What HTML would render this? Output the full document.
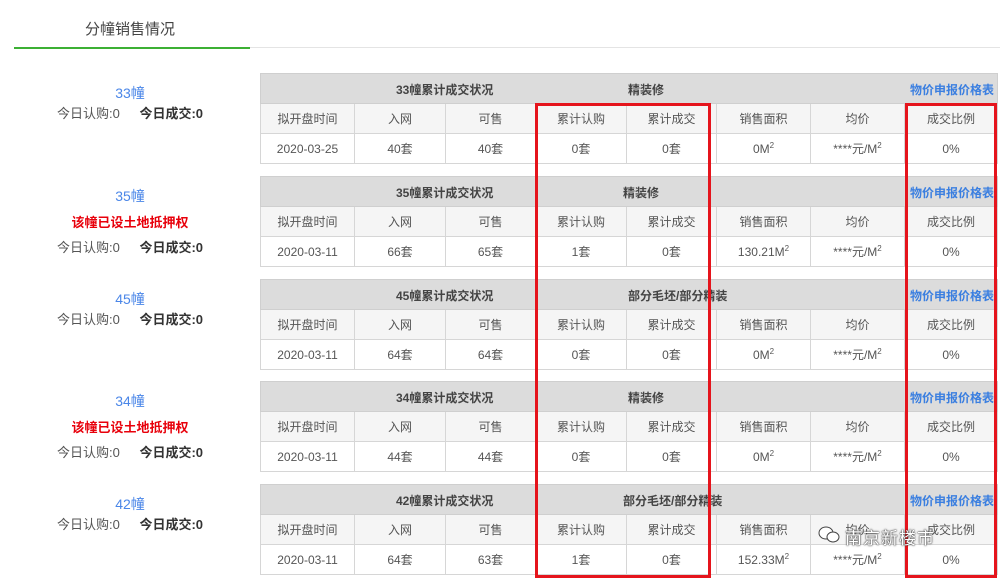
<!DOCTYPE html>
<html><head><meta charset="utf-8"><style>
body{margin:0;width:1000px;height:579px;background:#fff;font-family:"Liberation Sans","Noto Sans CJK SC",sans-serif;position:relative;overflow:hidden;color:#555}
.tab{position:absolute;left:85px;top:18px;font-size:15px;color:#444}
.line{position:absolute;left:14px;top:47px;width:986px;height:1px;background:#e4e4e4}
.gline{position:absolute;left:14px;top:47px;width:236px;height:2px;background:#3cb034}
.lb{position:absolute;left:40px;width:180px;text-align:center;font-size:13px}
.bn{color:#4a86e8;font-size:14px}
.red{color:#e8000b;font-weight:bold;font-size:13px}
.st{color:#555}.st b{color:#333;margin-left:16px}
table{position:absolute;left:260px;width:737px;border-collapse:collapse;font-size:12px;table-layout:fixed}
td{border:1px solid #d6d6d6;text-align:center;height:29px;padding:0;color:#555}
tr.h td{background:#dcdcdc;font-weight:bold;color:#444;border-color:#cfcfcf;position:relative}
tr.h span{position:absolute;top:7px;white-space:nowrap}
tr.c td{background:#f5f5f5}
.lk{color:#3b7fe0;right:3px}
sup{font-size:8px}
.rb{position:absolute;border:3px solid #e5141c;box-sizing:border-box}
.wm{position:absolute;left:845px;top:524px;font-size:17px;color:#fff;text-shadow:0 0 2px #333,0 0 1px #000;letter-spacing:1px}
.ic{position:absolute;left:818px;top:526px;width:22px;height:18px}
</style></head><body>
<div class="tab">分幢销售情况</div>
<div class="line"></div><div class="gline"></div>

<div class="lb" style="top:83px"><div class="bn">33幢</div><div class="st">今日认购:0 <b>今日成交:0</b></div></div>
<div class="lb" style="top:186px"><div class="bn">35幢</div><div class="red" style="margin-top:6px">该幢已设土地抵押权</div><div class="st" style="margin-top:6px">今日认购:0 <b>今日成交:0</b></div></div>
<div class="lb" style="top:289px"><div class="bn">45幢</div><div class="st">今日认购:0 <b>今日成交:0</b></div></div>
<div class="lb" style="top:391px"><div class="bn">34幢</div><div class="red" style="margin-top:6px">该幢已设土地抵押权</div><div class="st" style="margin-top:6px">今日认购:0 <b>今日成交:0</b></div></div>
<div class="lb" style="top:494px"><div class="bn">42幢</div><div class="st">今日认购:0 <b>今日成交:0</b></div></div>

<table style="top:73px"><colgroup><col width="94"><col width="91"><col width="90"><col width="91"><col width="90"><col width="94"><col width="94"><col width="93"></colgroup>
<tr class="h"><td colspan="8"><span style="left:135px">33幢累计成交状况</span><span style="left:367px">精装修</span><span class="lk">物价申报价格表</span></td></tr>
<tr class="c"><td>拟开盘时间</td><td>入网</td><td>可售</td><td>累计认购</td><td>累计成交</td><td>销售面积</td><td>均价</td><td>成交比例</td></tr>
<tr><td>2020-03-25</td><td>40套</td><td>40套</td><td>0套</td><td>0套</td><td>0M<sup>2</sup></td><td>****元/M<sup>2</sup></td><td>0%</td></tr></table>

<table style="top:176px"><colgroup><col width="94"><col width="91"><col width="90"><col width="91"><col width="90"><col width="94"><col width="94"><col width="93"></colgroup>
<tr class="h"><td colspan="8"><span style="left:135px">35幢累计成交状况</span><span style="left:362px">精装修</span><span class="lk">物价申报价格表</span></td></tr>
<tr class="c"><td>拟开盘时间</td><td>入网</td><td>可售</td><td>累计认购</td><td>累计成交</td><td>销售面积</td><td>均价</td><td>成交比例</td></tr>
<tr><td>2020-03-11</td><td>66套</td><td>65套</td><td>1套</td><td>0套</td><td>130.21M<sup>2</sup></td><td>****元/M<sup>2</sup></td><td>0%</td></tr></table>

<table style="top:279px"><colgroup><col width="94"><col width="91"><col width="90"><col width="91"><col width="90"><col width="94"><col width="94"><col width="93"></colgroup>
<tr class="h"><td colspan="8"><span style="left:135px">45幢累计成交状况</span><span style="left:367px">部分毛坯/部分精装</span><span class="lk">物价申报价格表</span></td></tr>
<tr class="c"><td>拟开盘时间</td><td>入网</td><td>可售</td><td>累计认购</td><td>累计成交</td><td>销售面积</td><td>均价</td><td>成交比例</td></tr>
<tr><td>2020-03-11</td><td>64套</td><td>64套</td><td>0套</td><td>0套</td><td>0M<sup>2</sup></td><td>****元/M<sup>2</sup></td><td>0%</td></tr></table>

<table style="top:381px"><colgroup><col width="94"><col width="91"><col width="90"><col width="91"><col width="90"><col width="94"><col width="94"><col width="93"></colgroup>
<tr class="h"><td colspan="8"><span style="left:135px">34幢累计成交状况</span><span style="left:367px">精装修</span><span class="lk">物价申报价格表</span></td></tr>
<tr class="c"><td>拟开盘时间</td><td>入网</td><td>可售</td><td>累计认购</td><td>累计成交</td><td>销售面积</td><td>均价</td><td>成交比例</td></tr>
<tr><td>2020-03-11</td><td>44套</td><td>44套</td><td>0套</td><td>0套</td><td>0M<sup>2</sup></td><td>****元/M<sup>2</sup></td><td>0%</td></tr></table>

<table style="top:484px"><colgroup><col width="94"><col width="91"><col width="90"><col width="91"><col width="90"><col width="94"><col width="94"><col width="93"></colgroup>
<tr class="h"><td colspan="8"><span style="left:135px">42幢累计成交状况</span><span style="left:362px">部分毛坯/部分精装</span><span class="lk">物价申报价格表</span></td></tr>
<tr class="c"><td>拟开盘时间</td><td>入网</td><td>可售</td><td>累计认购</td><td>累计成交</td><td>销售面积</td><td>均价</td><td>成交比例</td></tr>
<tr><td>2020-03-11</td><td>64套</td><td>63套</td><td>1套</td><td>0套</td><td>152.33M<sup>2</sup></td><td>****元/M<sup>2</sup></td><td>0%</td></tr></table>

<div class="rb" style="left:535px;top:103px;width:176px;height:475px"></div>
<div class="rb" style="left:905px;top:103px;width:92px;height:475px"></div>
<svg class="ic" viewBox="0 0 22 18"><ellipse cx="8" cy="7" rx="7" ry="6" fill="#fff" stroke="#444"/><ellipse cx="15" cy="11" rx="6" ry="5" fill="#fff" stroke="#444"/></svg>
<div class="wm">南京新楼市</div>
</body></html>
